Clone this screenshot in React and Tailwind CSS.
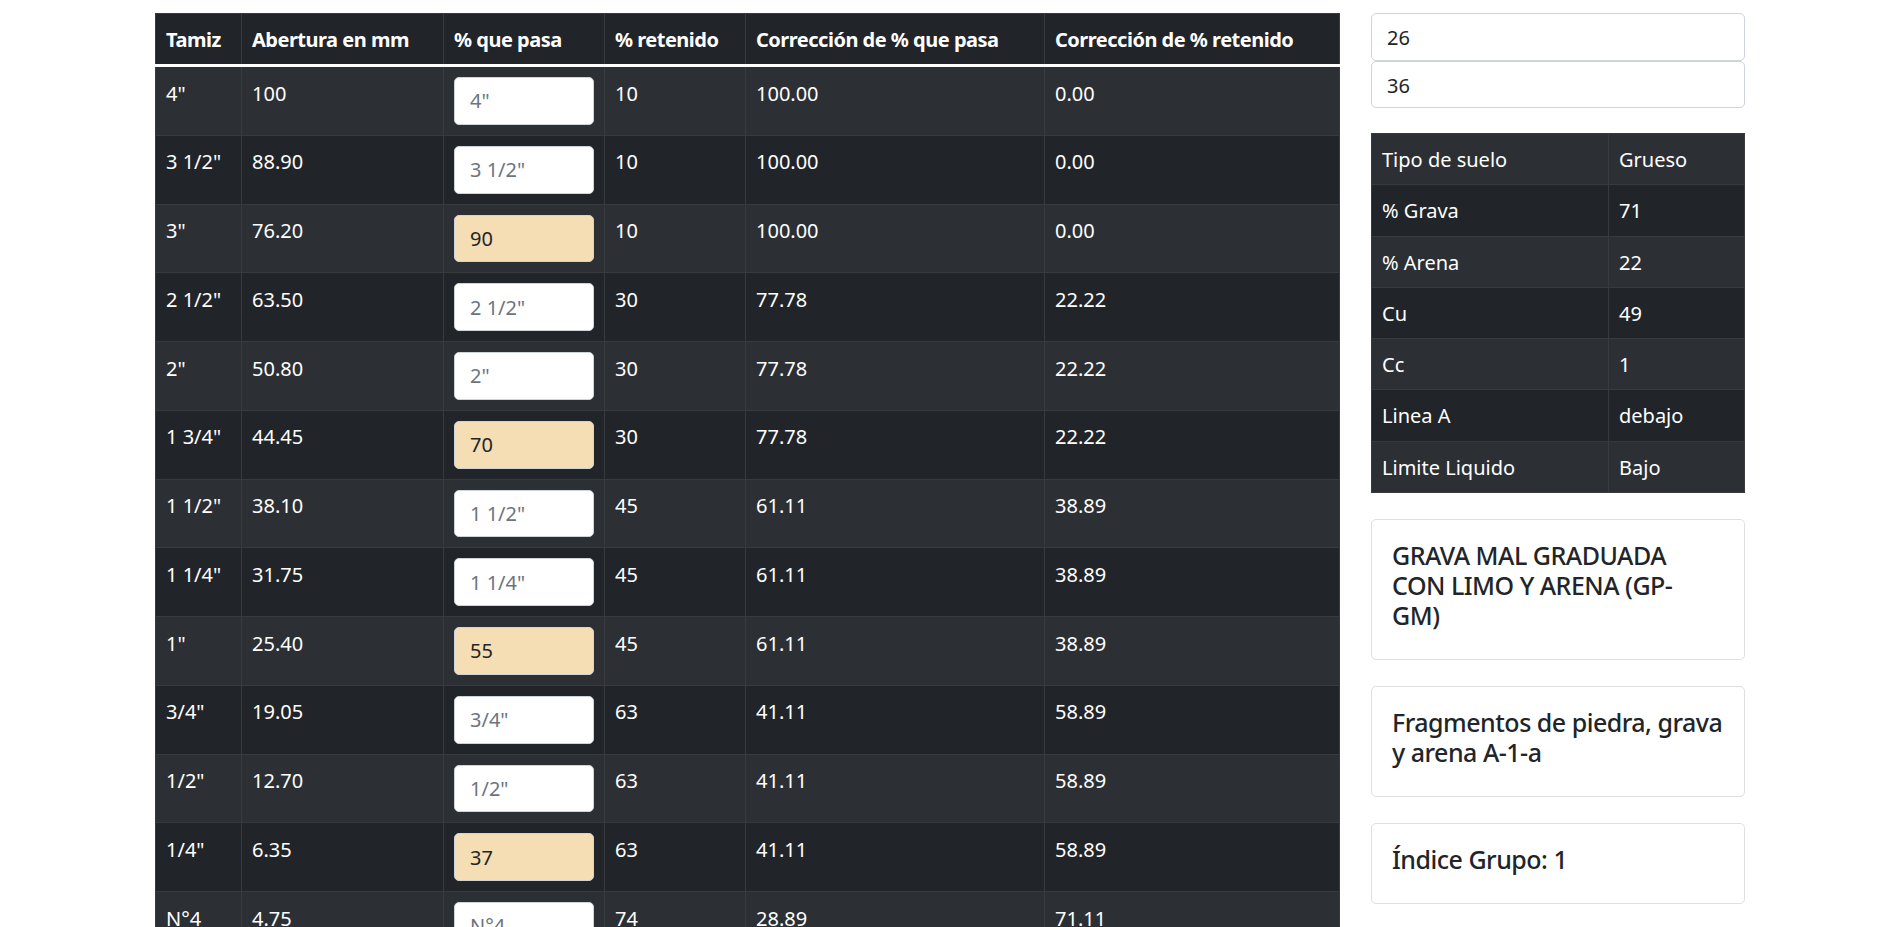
import React from 'react';

const headers = [
  { label: 'Tamiz', width: 'w-[86px]' },
  { label: 'Abertura en mm', width: 'w-[202px]' },
  { label: '% que pasa', width: 'w-[161px]' },
  { label: '% retenido', width: 'w-[141px]' },
  { label: 'Corrección de % que pasa', width: 'w-[299px]' },
  { label: 'Corrección de % retenido', width: 'w-[295px]' },
];

// value != null -> highlighted input with a typed value
const rows = [
  { tamiz: '4"', abertura: '100', value: null, retenido: '10', pasa: '100.00', ret: '0.00' },
  { tamiz: '3 1/2"', abertura: '88.90', value: null, retenido: '10', pasa: '100.00', ret: '0.00' },
  { tamiz: '3"', abertura: '76.20', value: '90', retenido: '10', pasa: '100.00', ret: '0.00' },
  { tamiz: '2 1/2"', abertura: '63.50', value: null, retenido: '30', pasa: '77.78', ret: '22.22' },
  { tamiz: '2"', abertura: '50.80', value: null, retenido: '30', pasa: '77.78', ret: '22.22' },
  { tamiz: '1 3/4"', abertura: '44.45', value: '70', retenido: '30', pasa: '77.78', ret: '22.22' },
  { tamiz: '1 1/2"', abertura: '38.10', value: null, retenido: '45', pasa: '61.11', ret: '38.89' },
  { tamiz: '1 1/4"', abertura: '31.75', value: null, retenido: '45', pasa: '61.11', ret: '38.89' },
  { tamiz: '1"', abertura: '25.40', value: '55', retenido: '45', pasa: '61.11', ret: '38.89' },
  { tamiz: '3/4"', abertura: '19.05', value: null, retenido: '63', pasa: '41.11', ret: '58.89' },
  { tamiz: '1/2"', abertura: '12.70', value: null, retenido: '63', pasa: '41.11', ret: '58.89' },
  { tamiz: '1/4"', abertura: '6.35', value: '37', retenido: '63', pasa: '41.11', ret: '58.89' },
  { tamiz: 'N°4', abertura: '4.75', value: null, retenido: '74', pasa: '28.89', ret: '71.11' },
];

const resumen = [
  ['Tipo de suelo', 'Grueso'],
  ['% Grava', '71'],
  ['% Arena', '22'],
  ['Cu', '49'],
  ['Cc', '1'],
  ['Linea A', 'debajo'],
  ['Limite Liquido', 'Bajo'],
];

// lines broken as in the original layout
const cards = [
  ['GRAVA MAL GRADUADA', 'CON LIMO Y ARENA (GP-', 'GM)'],
  ['Fragmentos de piedra, grava', 'y arena A-1-a'],
  ['Índice Grupo: 1'],
];

const cell = 'border border-[#373b3e] px-[10px] pt-[11.5px] pb-[8.5px] align-top leading-[30px]';

const App = () => {
  return (
    <div className="min-h-screen bg-white font-['Noto_Sans',sans-serif] text-[20px] text-[#212529]">
      <div className="flex items-start gap-[31px] pl-[155px] pt-[13px]">
        {/* Tabla granulometrica */}
        <table className="w-[1184px] table-fixed border-collapse bg-[#212529] text-white">
          <thead>
            <tr>
              {headers.map((h) => (
                <th
                  key={h.label}
                  className={`${h.width} border border-[#373b3e] px-[10px] pt-[11px] pb-[9px] text-left font-bold leading-[30px] tracking-[-0.5px]`}
                >
                  {h.label}
                </th>
              ))}
            </tr>
          </thead>
          <tbody className="border-t-[3px] border-t-white">
            {rows.map((r, i) => (
              <tr key={r.tamiz} className={i % 2 === 0 ? 'bg-[#2c3034]' : 'bg-[#212529]'}>
                <td className={cell}>{r.tamiz}</td>
                <td className={cell}>{r.abertura}</td>
                <td className="border border-[#373b3e] p-[10px] align-top">
                  <input
                    type="text"
                    readOnly
                    value={r.value ?? ''}
                    placeholder={r.tamiz}
                    className={`block h-[47.75px] w-full rounded-[5px] border border-[#ced4da] px-[15px] text-[20px] leading-[30px] text-[#212529] placeholder:text-[#6c757d] ${
                      r.value ? 'bg-[#f5deb3]' : 'bg-white'
                    }`}
                  />
                </td>
                <td className={cell}>{r.retenido}</td>
                <td className={cell}>{r.pasa}</td>
                <td className={cell}>{r.ret}</td>
              </tr>
            ))}
          </tbody>
        </table>

        {/* Panel lateral */}
        <div className="w-[374px]">
          <input
            type="text"
            readOnly
            value="26"
            className="block h-[47.5px] w-full rounded-[5px] border border-[#ced4da] bg-white px-[15px] pt-[2px] text-[20px] leading-[30px] text-[#212529]"
          />
          <input
            type="text"
            readOnly
            value="36"
            className="block h-[47.5px] w-full rounded-[5px] border border-[#ced4da] bg-white px-[15px] pt-[2px] text-[20px] leading-[30px] text-[#212529]"
          />

          <table className="mt-[25px] w-full table-fixed border-collapse bg-[#212529] text-white">
            <tbody>
              {resumen.map(([k, v], i) => (
                <tr key={k} className={i % 2 === 0 ? 'bg-[#2c3034]' : 'bg-[#212529]'}>
                  <td className="w-[237px] border border-[#373b3e] px-[10px] pt-[11px] pb-[9px] leading-[30.25px]">{k}</td>
                  <td className="border border-[#373b3e] px-[10px] pt-[11px] pb-[9px] leading-[30.25px]">{v}</td>
                </tr>
              ))}
            </tbody>
          </table>

          <div className="mt-[26px] flex flex-col gap-[26px]">
            {cards.map((lines) => (
              <div key={lines[0]} className="rounded-[5px] border border-black/[0.125] p-[20px]">
                <h5 className="mb-[9px] whitespace-nowrap text-[25px] font-medium leading-[30px] tracking-[-0.5px] text-[#212529]">
                  {lines.map((l, j) => (
                    <React.Fragment key={l}>
                      {j > 0 && <br />}
                      {l}
                    </React.Fragment>
                  ))}
                </h5>
              </div>
            ))}
          </div>
        </div>
      </div>
    </div>
  );
};

export default App;
